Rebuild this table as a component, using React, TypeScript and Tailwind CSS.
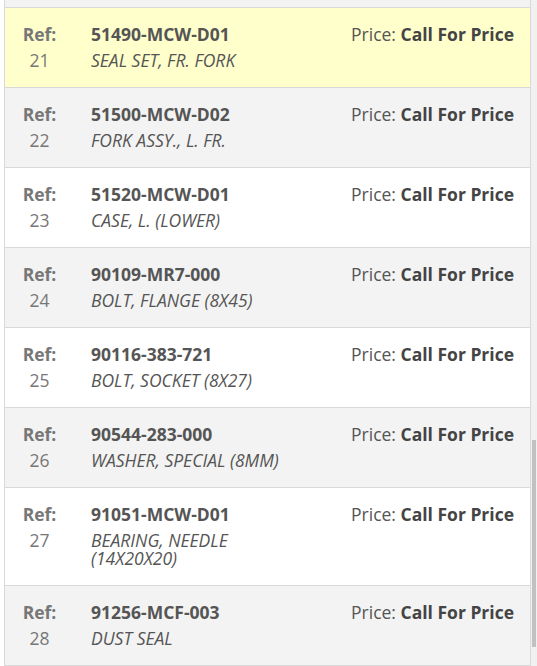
import React from 'react'

type Part = {
  ref: number
  num: string
  desc: string[]
}

const parts: Part[] = [
  { ref: 21, num: '51490-MCW-D01', desc: ['SEAL SET, FR. FORK'] },
  { ref: 22, num: '51500-MCW-D02', desc: ['FORK ASSY., L. FR.'] },
  { ref: 23, num: '51520-MCW-D01', desc: ['CASE, L. (LOWER)'] },
  { ref: 24, num: '90109-MR7-000', desc: ['BOLT, FLANGE (8X45)'] },
  { ref: 25, num: '90116-383-721', desc: ['BOLT, SOCKET (8X27)'] },
  { ref: 26, num: '90544-283-000', desc: ['WASHER, SPECIAL (8MM)'] },
  { ref: 27, num: '91051-MCW-D01', desc: ['BEARING, NEEDLE', '(14X20X20)'] },
  { ref: 28, num: '91256-MCF-003', desc: ['DUST SEAL'] },
]

const rowBg = (ref: number) => {
  if (ref === 21) return 'bg-[#ffffcc]'
  return ref % 2 === 0 ? 'bg-[#f3f3f3]' : 'bg-white'
}

function PartRow({ part }: { part: Part }) {
  return (
    <div className={`flex border-b border-[#d9d9d9] pt-[14px] pb-[18px] ${rowBg(part.ref)}`}>
      <div className="w-[69px] shrink-0 flex flex-col items-center text-[#777] text-[17.5px]">
        <div className="font-bold leading-[24px]">Ref:</div>
        <div className="leading-[18px] mt-[5px]">{part.ref}</div>
      </div>
      <div className="ml-[17px] flex-1 text-[#555]">
        <div className="font-bold text-[17.5px] leading-[24px]">{part.num}</div>
        <div className="italic text-[17.5px] leading-[18px] mt-[5px]">
          {part.desc.map((d) => (
            <div key={d}>{d}</div>
          ))}
        </div>
      </div>
      <div className="pr-[16px] text-[17.5px] leading-[24px] text-[#555]">
        Price: <span className="font-bold text-[#444]">Call For Price</span>
      </div>
    </div>
  )
}

export default function App() {
  return (
    <div
      className="w-[537px] h-[666px] overflow-hidden bg-white flex"
      style={{ fontFamily: '"Open Sans", "Noto Sans", sans-serif' }}
    >
      <div className="ml-[4px] w-[527px] border-l border-r border-[#d9d9d9] flex flex-col">
        <div className="h-[8px] shrink-0 bg-[#f3f3f3] border-b border-[#d9d9d9]" />
        {parts.map((p) => (
          <PartRow key={p.ref} part={p} />
        ))}
      </div>
      <div className="w-[6px] bg-[#f1f1f1] flex flex-col">
        <div className="h-[440px] shrink-0" />
        <div className="h-[207px] mx-[1px] bg-[#c1c1c1]" />
      </div>
    </div>
  )
}
